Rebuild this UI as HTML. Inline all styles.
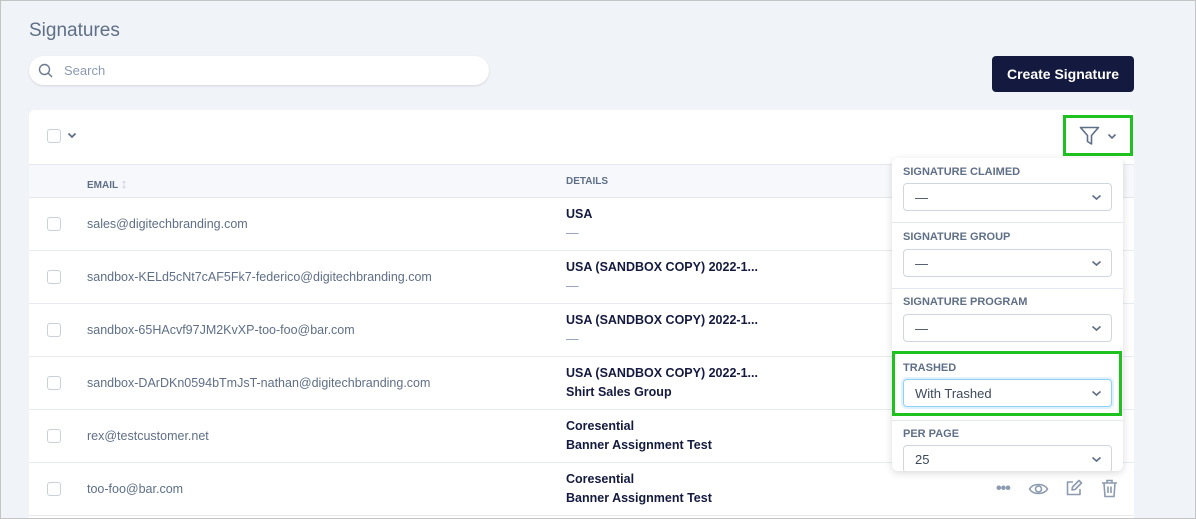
<!DOCTYPE html>
<html style="overflow:hidden;width:1196px;height:519px"><head><style>
*{box-sizing:border-box;margin:0;padding:0}
body{width:1196px;height:519px;overflow:hidden;background:#f0f3f8;font-family:"Liberation Sans",sans-serif;position:relative}
.frame{position:absolute;left:0;top:0;width:1196px;height:519px;border:1px solid #c4c4c4;z-index:10;pointer-events:none}
.a{position:absolute}
.title{left:29px;top:20px;font-size:19px;color:#5f6f87}
.search{left:29px;top:56px;width:460px;height:29px;background:#fff;border-radius:15px;box-shadow:0 1px 2px rgba(0,0,0,.12)}
.search span{position:absolute;left:35px;top:7px;font-size:13px;color:#8c9bb0}
.btn{left:992px;top:56px;width:142px;height:36px;background:#141a3f;border-radius:4px;color:#fff;font-weight:bold;font-size:14px;text-align:center;line-height:36px}
.card{left:29px;top:110px;width:1105px;height:409px;background:#fff;border-radius:6px 6px 0 0}
.cb{position:absolute;width:14px;height:14px;border:1px solid #c9d0da;border-radius:3px;background:#fff}
.hdr{left:29px;top:164px;width:1105px;height:34px;background:#f6f8fb;border-top:1px solid #e3e8ef;border-bottom:1px solid #e3e8ef}
.th{font-size:10px;font-weight:bold;color:#5f6f87;top:176px}
.row{left:29px;width:1105px;border-bottom:1px solid #e8ecf1;height:53px}
.em{left:87px;font-size:12.5px;color:#5f6f87}
.d{left:566px;font-size:12.5px;font-weight:bold;color:#141a3f;line-height:19px}
.d i{font-style:normal;color:#8c9bb0;font-weight:normal}
.dd{left:892px;top:158px;width:231px;height:313px;background:#fff;border-radius:6px;box-shadow:0 2px 8px rgba(0,0,0,.15);overflow:hidden}
.lab{position:absolute;left:11px;font-size:11px;font-weight:bold;color:#5f6f87}
.sel{position:absolute;left:11px;width:209px;height:28px;border:1px solid #cfd6e0;border-radius:4px;font-size:13px;color:#3d4a5e;padding:6px 11px}
.sel svg{position:absolute;right:9px;top:10px}
.sep{position:absolute;left:0;width:231px;border-top:1px solid #e3e8ef}
.green{border:3px solid #1ec21e}
</style></head><body>
<div class="frame"></div>
<div class="a title">Signatures</div>
<div class="a search"><svg style="position:absolute;left:9px;top:7px" width="16" height="16" viewBox="0 0 16 16"><circle cx="6.5" cy="6.5" r="5" fill="none" stroke="#6b7a90" stroke-width="1.4"/><path d="M10.3 10.3L14 14" stroke="#6b7a90" stroke-width="1.4"/></svg><span>Search</span></div>
<div class="a btn">Create Signature</div>
<div class="a card"></div>
<div class="cb" style="left:47px;top:129px"></div>
<svg class="a" style="left:67px;top:132px" width="10" height="7" viewBox="0 0 10 7"><path d="M1.5 1.5L5 5 8.5 1.5" fill="none" stroke="#5f6f87" stroke-width="1.8"/></svg>
<div class="a green" style="left:1063px;top:115px;width:70px;height:41px"></div>
<svg class="a" style="left:1079px;top:126px" width="21" height="20" viewBox="0 0 21 20"><path d="M1.5 1.5H19.5L12.5 9.5V18L8.5 15.5V9.5Z" fill="none" stroke="#5f6f87" stroke-width="1.6" stroke-linejoin="round"/></svg>
<svg class="a" style="left:1107px;top:133px" width="10" height="7" viewBox="0 0 10 7"><path d="M1.5 1.5L5 5 8.5 1.5" fill="none" stroke="#5f6f87" stroke-width="1.6"/></svg>
<div class="a hdr"></div>
<div class="a th" style="left:87px">EMAIL <span style="color:#c4ccd8;font-weight:normal;font-size:13px">&#8597;</span></div>
<div class="a th" style="left:566px">DETAILS</div>

<div class="a row" style="top:198px"></div><div class="cb" style="left:47px;top:217px"></div>
<div class="a em" style="top:217px">sales@digitechbranding.com</div><div class="a d" style="top:205px">USA<br><i>—</i></div>
<div class="a row" style="top:251px"></div><div class="cb" style="left:47px;top:270px"></div>
<div class="a em" style="top:270px">sandbox-KELd5cNt7cAF5Fk7-federico@digitechbranding.com</div><div class="a d" style="top:258px">USA (SANDBOX COPY) 2022-1...<br><i>—</i></div>
<div class="a row" style="top:304px"></div><div class="cb" style="left:47px;top:323px"></div>
<div class="a em" style="top:323px">sandbox-65HAcvf97JM2KvXP-too-foo@bar.com</div><div class="a d" style="top:311px">USA (SANDBOX COPY) 2022-1...<br><i>—</i></div>
<div class="a row" style="top:357px"></div><div class="cb" style="left:47px;top:376px"></div>
<div class="a em" style="top:376px">sandbox-DArDKn0594bTmJsT-nathan@digitechbranding.com</div><div class="a d" style="top:364px">USA (SANDBOX COPY) 2022-1...<br>Shirt Sales Group</div>
<div class="a row" style="top:410px"></div><div class="cb" style="left:47px;top:429px"></div>
<div class="a em" style="top:429px">rex@testcustomer.net</div><div class="a d" style="top:417px">Coresential<br>Banner Assignment Test</div>
<div class="a row" style="top:463px"></div><div class="cb" style="left:47px;top:482px"></div>
<div class="a em" style="top:482px">too-foo@bar.com</div><div class="a d" style="top:470px">Coresential<br>Banner Assignment Test</div>

<div class="a" style="left:996px;top:480px;color:#8c9bb0;font-size:16px;font-weight:bold;letter-spacing:-1px">•••</div>
<svg class="a" style="left:1028px;top:481px" width="21" height="16" viewBox="0 0 21 16"><path d="M1.5 8C5 2 16 2 19.5 8 16 14 5 14 1.5 8Z" fill="none" stroke="#8c9bb0" stroke-width="1.6"/><circle cx="10.5" cy="8" r="3" fill="none" stroke="#8c9bb0" stroke-width="1.6"/></svg>
<svg class="a" style="left:1065px;top:479px" width="18" height="18" viewBox="0 0 18 18"><path d="M8 3H2.5V15.5H15V10M7 11L7.5 8 14 1.5 16.5 4 10 10.5Z" fill="none" stroke="#8c9bb0" stroke-width="1.6" stroke-linejoin="round"/></svg>
<svg class="a" style="left:1101px;top:479px" width="17" height="19" viewBox="0 0 17 19"><path d="M1 4H16M6 4V1.5H11V4M3 4L4 17.5H13L14 4M7 7.5V14M10 7.5V14" fill="none" stroke="#8c9bb0" stroke-width="1.6"/></svg>

<div class="a dd">
<div class="lab" style="top:8px">SIGNATURE CLAIMED</div>
<div class="sel" style="top:25px">—<svg width="11" height="7" viewBox="0 0 11 7"><path d="M1.5 1.5L5.5 5 9.5 1.5" fill="none" stroke="#5f6f87" stroke-width="1.6"/></svg></div>
<div class="sep" style="top:64px"></div>
<div class="lab" style="top:73px">SIGNATURE GROUP</div>
<div class="sel" style="top:91px">—<svg width="11" height="7" viewBox="0 0 11 7"><path d="M1.5 1.5L5.5 5 9.5 1.5" fill="none" stroke="#5f6f87" stroke-width="1.6"/></svg></div>
<div class="sep" style="top:130px"></div>
<div class="lab" style="top:138px">SIGNATURE PROGRAM</div>
<div class="sel" style="top:156px">—<svg width="11" height="7" viewBox="0 0 11 7"><path d="M1.5 1.5L5.5 5 9.5 1.5" fill="none" stroke="#5f6f87" stroke-width="1.6"/></svg></div>
<div class="green" style="position:absolute;left:0;top:193px;width:230px;height:65px"></div>
<div class="lab" style="top:204px">TRASHED</div>
<div class="sel" style="top:221px;border-color:#8fd0f5;box-shadow:0 0 0 2px #dff1fc">With Trashed<svg width="11" height="7" viewBox="0 0 11 7"><path d="M1.5 1.5L5.5 5 9.5 1.5" fill="none" stroke="#5f6f87" stroke-width="1.6"/></svg></div>
<div class="sep" style="top:262px"></div>
<div class="lab" style="top:270px">PER PAGE</div>
<div class="sel" style="top:287px">25<svg width="11" height="7" viewBox="0 0 11 7"><path d="M1.5 1.5L5.5 5 9.5 1.5" fill="none" stroke="#5f6f87" stroke-width="1.6"/></svg></div>
</div>
</body></html>
